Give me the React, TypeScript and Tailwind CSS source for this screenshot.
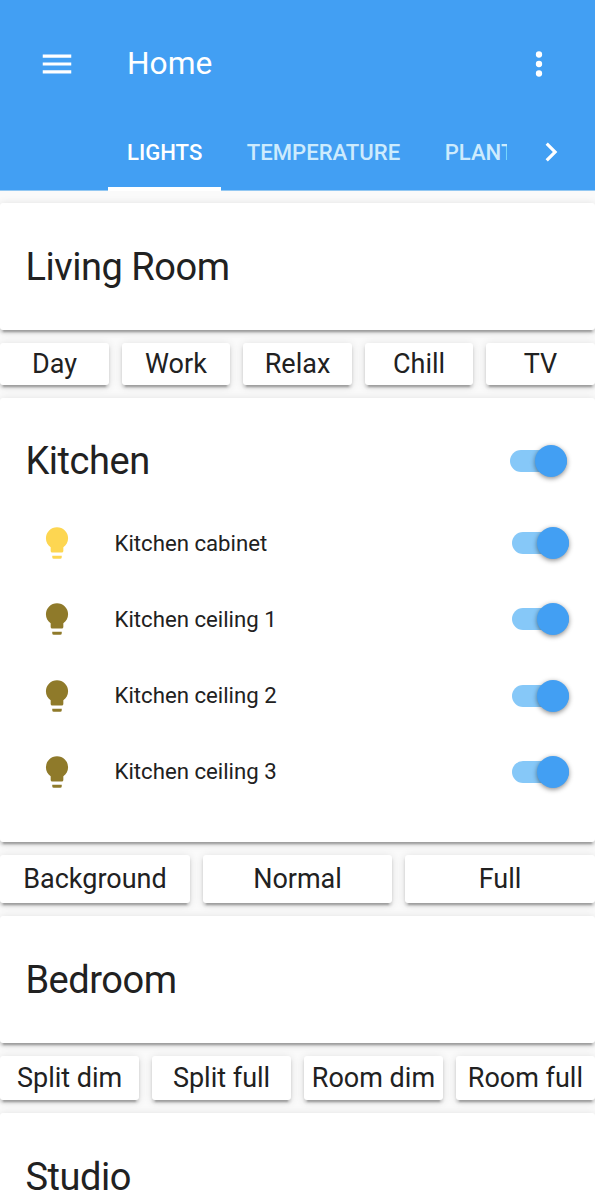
import { useState } from "react";

const tabs = ["Lights", "Temperature", "Plants"];

const kitchenLights = [
  { name: "Kitchen cabinet", color: "text-[#fdd651]" },
  { name: "Kitchen ceiling 1", color: "text-[#8f7a2a]" },
  { name: "Kitchen ceiling 2", color: "text-[#8f7a2a]" },
  { name: "Kitchen ceiling 3", color: "text-[#8f7a2a]" },
];

const cardStyle =
  "bg-white rounded-[3px] shadow-[0_3px_3px_rgba(0,0,0,0.14),0_1.6px_8px_rgba(0,0,0,0.12),0_5px_1.6px_-3px_rgba(0,0,0,0.2)]";

function Icon({ path, className = "" }: { path: string; className?: string }) {
  return (
    <svg viewBox="0 0 24 24" className={`size-[38px] shrink-0 fill-current ${className}`}>
      <path d={path} />
    </svg>
  );
}

const icons = {
  menu: "M3 6h18v2H3V6zm0 5h18v2H3v-2zm0 5h18v2H3v-2z",
  dots: "M12 8a2 2 0 1 0 0-4 2 2 0 0 0 0 4zm0 2a2 2 0 1 0 0 4 2 2 0 0 0 0-4zm0 6a2 2 0 1 0 0 4 2 2 0 0 0 0-4z",
  chevron: "M8.59 16.58 13.17 12 8.59 7.41 10 6l6 6-6 6-1.41-1.42z",
  bulb: "M12 2a7 7 0 0 0-7 7c0 2.38 1.19 4.47 3 5.74V17a1 1 0 0 0 1 1h6a1 1 0 0 0 1-1v-2.26c1.81-1.27 3-3.36 3-5.74a7 7 0 0 0-7-7zM9 21a1 1 0 0 0 1 1h4a1 1 0 0 0 1-1v-1H9v1z",
};

function Toggle() {
  const [on, setOn] = useState(true);

  return (
    <button
      role="switch"
      aria-checked={on}
      onClick={() => setOn(!on)}
      className={`flex h-[22px] w-[57px] shrink-0 items-center rounded-full ${
        on ? "justify-end bg-[#86c8f8]" : "justify-start bg-gray-300"
      }`}
    >
      <span
        className={`size-8 shrink-0 rounded-full shadow-[0_1.5px_5px_rgba(0,0,0,0.45)] ${
          on ? "bg-[#429ff3]" : "bg-gray-50"
        }`}
      />
    </button>
  );
}

function Title({ children }: { children: string }) {
  return (
    <h2 className="text-[38px] leading-[64px] tracking-[-0.012em]">{children}</h2>
  );
}

function RoomCard({ title }: { title: string }) {
  return (
    <section className={`h-[127px] shrink-0 px-[25.4px] pt-8 ${cardStyle}`}>
      <Title>{title}</Title>
    </section>
  );
}

function Scenes({ names, className }: { names: string[]; className: string }) {
  return (
    <div className={`flex shrink-0 gap-[12.7px] ${className}`}>
      {names.map((name) => (
        <button
          key={name}
          className={`flex min-w-0 flex-1 basis-0 items-center justify-center whitespace-nowrap text-[27px] leading-none ${cardStyle}`}
        >
          {name}
        </button>
      ))}
    </div>
  );
}

export default function App() {
  return (
    <div className="flex h-[1200px] w-[595px] flex-col overflow-hidden bg-[#fafafa] font-['Roboto','Noto_Sans',sans-serif] text-[#212121]">
      <header className="flex h-[191px] shrink-0 flex-col border-b border-[#93c8f2] bg-[#429ff3] text-white">
        <div className="flex h-[127px] items-center pr-[37.5px] pl-[38px]">
          <Icon path={icons.menu} />
          <h1 className="ml-[51px] flex-1 pt-px text-[31.7px]">Home</h1>
          <Icon path={icons.dots} />
        </div>

        <div className="-mb-px flex h-16 pl-[108px]">
          <nav className="flex w-[399px] gap-[6.5px] overflow-hidden">
            {tabs.map((tab, i) => (
              <button
                key={tab}
                className={`flex shrink-0 items-center border-b-4 px-[19px] pb-[10px] text-[22.1px] leading-none font-medium uppercase ${
                  i === 0 ? "border-white" : "border-transparent text-[#cdebfd]"
                }`}
              >
                {tab}
              </button>
            ))}
          </nav>
          <Icon path={icons.chevron} className="mt-[6px] ml-[25px]" />
        </div>
      </header>

      <main className="flex flex-1 flex-col pt-3">
        <RoomCard title="Living Room" />
        <Scenes names={["Day", "Work", "Relax", "Chill", "TV"]} className="my-[13px] h-[42px]" />

        <section className={`h-[444px] shrink-0 pt-[31px] ${cardStyle}`}>
          <div className="flex items-center justify-between pr-7 pl-[25.4px]">
            <Title>Kitchen</Title>
            <Toggle />
          </div>
          <ul className="mt-[18.5px] flex flex-col gap-[12.7px]">
            {kitchenLights.map((light) => (
              <li key={light.name} className="flex h-[63.5px] items-center pr-[26.5px] pl-[38px]">
                <Icon path={icons.bulb} className={light.color} />
                <span className="ml-[38.5px] flex-1 text-[22.2px]">{light.name}</span>
                <Toggle />
              </li>
            ))}
          </ul>
        </section>
        <Scenes names={["Background", "Normal", "Full"]} className="my-[13px] h-[48px]" />

        <RoomCard title="Bedroom" />
        <Scenes
          names={["Split dim", "Split full", "Room dim", "Room full"]}
          className="my-[13px] h-[44px]"
        />

        <RoomCard title="Studio" />
      </main>
    </div>
  );
}
